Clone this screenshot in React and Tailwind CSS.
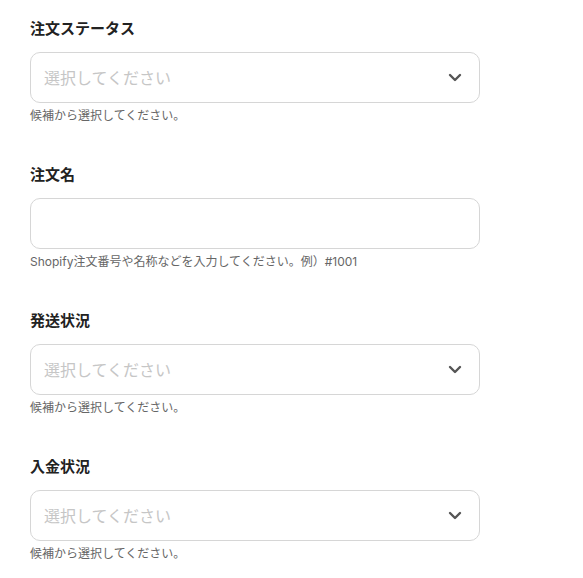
import React from 'react'

const font = { fontFamily: 'Inter, "Noto Sans CJK JP", sans-serif' }

function Chevron() {
  return (
    <svg width="14" height="9" viewBox="0 0 14 9" fill="none" className="shrink-0">
      <path d="M2 2l5 5 5-5" stroke="#555" strokeWidth="2.4" strokeLinecap="round" strokeLinejoin="round" />
    </svg>
  )
}

function Field({ label, help, select }) {
  return (
    <div className="flex flex-col">
      <div className="text-[15px] leading-[22px] font-semibold text-[#222] mb-3">{label}</div>
      <div className="w-[450px] h-[51px] border border-[#d6d6d6] rounded-[10px] bg-white flex items-center pl-[13px] pr-[17px]">
        {select ? (
          <>
            <span className="flex-1 text-[16px] text-[#c6c6c6]">選択してください</span>
            <Chevron />
          </>
        ) : null}
      </div>
      <div className="mt-[5px] text-[12px] leading-4 text-[#666]">{help}</div>
    </div>
  )
}

export default function App() {
  return (
    <div style={font} className="bg-white min-h-screen pl-[30px] pt-[18px] flex flex-col gap-[40px]">
      <Field label="注文ステータス" help="候補から選択してください。" select />
      <Field label="注文名" help="Shopify注文番号や名称などを入力してください。例）#1001" />
      <Field label="発送状況" help="候補から選択してください。" select />
      <Field label="入金状況" help="候補から選択してください。" select />
    </div>
  )
}
